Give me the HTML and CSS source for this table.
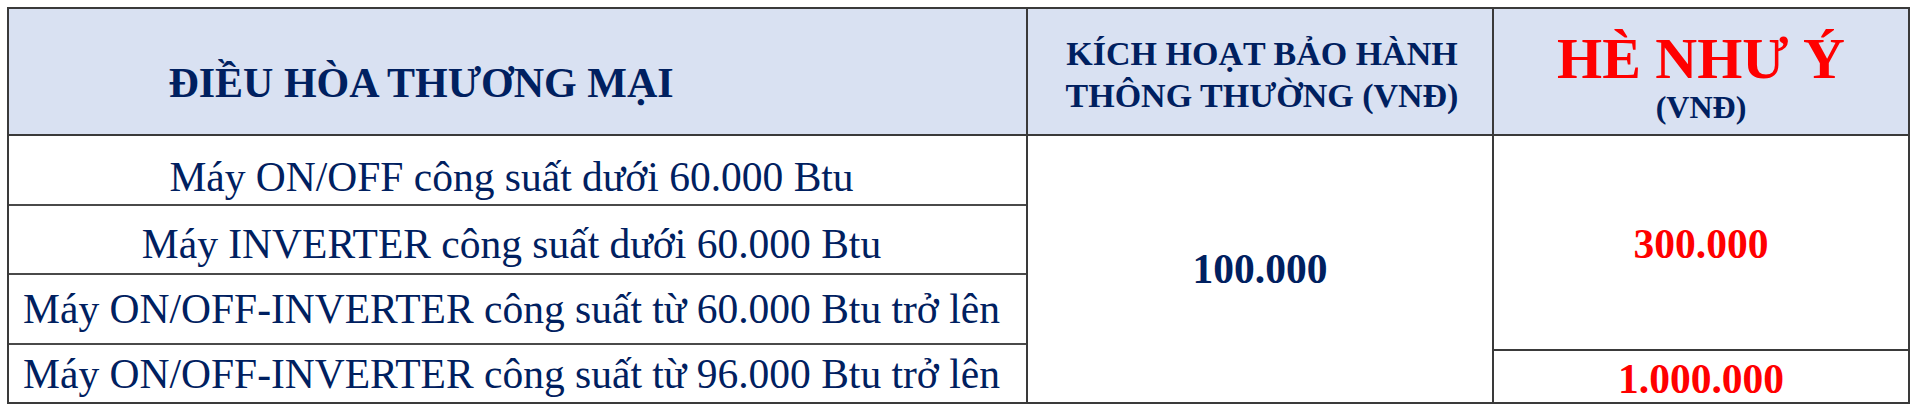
FILE: index.html
```html
<!DOCTYPE html>
<html lang="vi">
<head>
<meta charset="utf-8">
<title>Điều hòa thương mại</title>
<link rel="stylesheet" href="styles.css">
</head>
<body>
<div class="price-table">
  <div class="col col-name">
    <div class="cell head head-name">ĐIỀU HÒA THƯƠNG MẠI</div>
    <div class="cell row row-1">Máy ON/OFF công suất dưới 60.000 Btu</div>
    <div class="cell row row-2">Máy INVERTER công suất dưới 60.000 Btu</div>
    <div class="cell row row-3">Máy ON/OFF-INVERTER công suất từ 60.000 Btu trở lên</div>
    <div class="cell row row-4">Máy ON/OFF-INVERTER công suất từ 96.000 Btu trở lên</div>
  </div>
  <div class="col col-std">
    <div class="cell head head-std">KÍCH HOẠT BẢO HÀNH<br>THÔNG THƯỜNG (VNĐ)</div>
    <div class="cell value value-std">100.000</div>
  </div>
  <div class="col col-promo">
    <div class="cell head head-promo">
      <div class="promo-title">HÈ NHƯ Ý</div>
      <div class="promo-unit">(VNĐ)</div>
    </div>
    <div class="cell value promo-top">300.000</div>
    <div class="cell value promo-bottom">1.000.000</div>
  </div>
</div>
</body>
</html>
```
FILE: styles.css
```css
html, body {
  margin: 0;
  padding: 0;
  background: #ffffff;
}

body {
  padding: 7px 0 0 7px;
  font-family: "Liberation Serif", "Times New Roman", serif;
  color: #002060;
}

.price-table {
  display: flex;
  width: 1903px;
  height: 397px;
  box-sizing: border-box;
  border: 2px solid #3a3a3a;
}

.col {
  display: flex;
  flex-direction: column;
  box-sizing: border-box;
}

.col-name {
  width: 1019px;
  border-right: 2px solid #3a3a3a;
}

.col-std {
  width: 466px;
  border-right: 2px solid #3a3a3a;
}

.col-promo {
  width: 414px;
}

.cell {
  display: flex;
  align-items: center;
  justify-content: center;
  box-sizing: border-box;
  text-align: center;
  white-space: nowrap;
}

.head {
  height: 127px;
  flex: none;
  background: #d9e1f2;
  border-bottom: 2px solid #3a3a3a;
  font-weight: bold;
}

.head-name {
  font-size: 42px;
  line-height: 48px;
  padding-top: 22px;
  padding-right: 193px;
}

.head-std {
  font-size: 34px;
  line-height: 42px;
  padding-top: 6px;
  padding-left: 4px;
}

.head-promo {
  flex-direction: column;
  padding-top: 8px;
}

.promo-title {
  color: #ff0000;
  font-size: 58px;
  line-height: 62px;
}

.promo-unit {
  font-size: 32px;
  line-height: 34px;
}

.row {
  font-size: 41.5px;
  line-height: 48px;
  border-bottom: 2px solid #4a4a4a;
  flex: none;
  padding-right: 12px;
}

.row-1 { height: 70px; padding-top: 14px; }
.row-2 { height: 69px; padding-top: 9px; }
.row-3 { height: 70px; }
.row-4 { height: 57px; border-bottom: none; }

.value {
  font-size: 41.5px;
  line-height: 48px;
  font-weight: bold;
}

.value-std {
  flex: 1;
}

.promo-top {
  height: 215px;
  flex: none;
  color: #ff0000;
  border-bottom: 2px solid #3a3a3a;
  padding-top: 2px;
}

.promo-bottom {
  flex: 1;
  color: #ff0000;
  padding-top: 4px;
}
```
